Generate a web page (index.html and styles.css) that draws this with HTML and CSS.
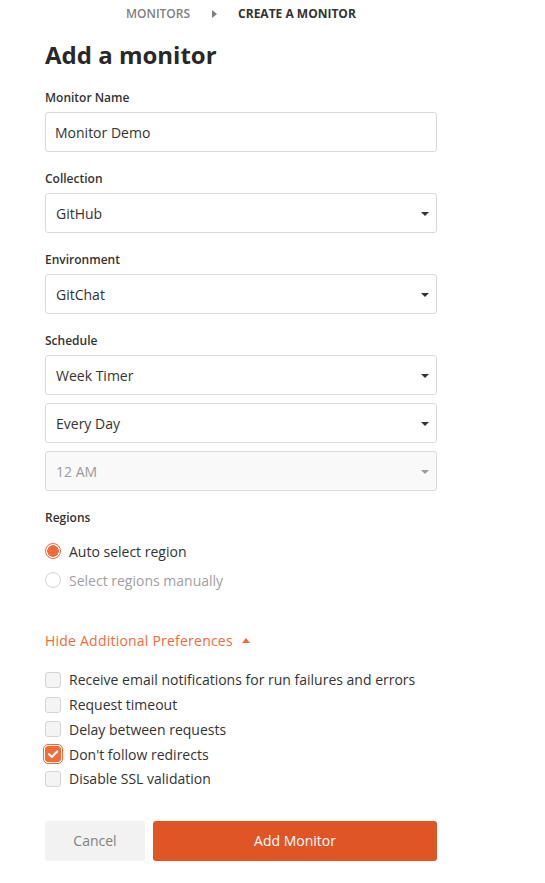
FILE: index.html
```html
<!DOCTYPE html>
<html>
<head>
<meta charset="utf-8">
<link rel="stylesheet" href="styles.css">
</head>
<body>
<nav class="crumbs">
  <span class="crumb">MONITORS</span>
  <span class="crumb-sep"></span>
  <span class="crumb current">CREATE A MONITOR</span>
</nav>
<main class="form">
  <h1 class="title">Add a monitor</h1>

  <div class="field">
    <div class="label">Monitor Name</div>
    <div class="control">Monitor Demo</div>
  </div>

  <div class="field">
    <div class="label">Collection</div>
    <div class="control select">GitHub<span class="caret"></span></div>
  </div>

  <div class="field">
    <div class="label">Environment</div>
    <div class="control select">GitChat<span class="caret"></span></div>
  </div>

  <div class="field">
    <div class="label">Schedule</div>
    <div class="stack">
      <div class="control select">Week Timer<span class="caret"></span></div>
      <div class="control select">Every Day<span class="caret"></span></div>
      <div class="control select disabled">12 AM<span class="caret"></span></div>
    </div>
  </div>

  <div class="field">
    <div class="label">Regions</div>
    <div class="radios">
      <div class="radio-row"><span class="radio on"></span><span>Auto select region</span></div>
      <div class="radio-row muted"><span class="radio"></span><span>Select regions manually</span></div>
    </div>
  </div>

  <div class="toggle">Hide Additional Preferences<span class="up"></span></div>

  <div class="checks">
    <div class="check-row"><span class="box"></span><span>Receive email notifications for run failures and errors</span></div>
    <div class="check-row"><span class="box"></span><span>Request timeout</span></div>
    <div class="check-row"><span class="box"></span><span>Delay between requests</span></div>
    <div class="check-row"><span class="box on"><svg viewBox="0 0 16 16" width="16" height="16"><path d="M4 8.2l2.8 2.8L12.2 5.4" fill="none" stroke="#fff" stroke-width="2.2" stroke-linecap="round" stroke-linejoin="round"/></svg></span><span>Don't follow redirects</span></div>
    <div class="check-row"><span class="box"></span><span>Disable SSL validation</span></div>
  </div>

  <div class="actions">
    <button class="btn cancel">Cancel</button>
    <button class="btn primary">Add Monitor</button>
  </div>
</main>
</body>
</html>
```
FILE: styles.css
```css
* { box-sizing: border-box; }
body {
  margin: 0;
  font-family: "Open Sans", "Noto Sans", sans-serif;
  color: #333;
  background: #fff;
}
.crumbs {
  display: flex;
  align-items: center;
  padding: 4px 0 0 126px;
  height: 24px;
  font-size: 12px;
  line-height: 20px;
  font-weight: 600;
}
.crumb { color: #808080; }
.crumb.current { color: #333; font-weight: 700; }
.crumb-sep {
  width: 0; height: 0;
  margin: 0 21px 0 22px;
  border-top: 4px solid transparent;
  border-bottom: 4px solid transparent;
  border-left: 5px solid #808080;
}
.form {
  width: 392px;
  margin-left: 45px;
}
.title {
  margin: 15px 0 19px;
  font-size: 24px;
  line-height: 32px;
  font-weight: 700;
  color: #282828;
}
.field { margin-bottom: 19px; }
.label {
  font-size: 12px;
  line-height: 16px;
  font-weight: 600;
  margin-bottom: 6px;
  color: #333;
}
.control {
  position: relative;
  height: 40px;
  border: 1px solid #dadada;
  border-radius: 3px;
  padding: 0 9px;
  display: flex;
  align-items: center;
  font-size: 14px;
  color: #333;
  background: #fff;
}
.select { padding-left: 10px; }
.caret {
  position: absolute;
  right: 7px;
  top: 18px;
  width: 0; height: 0;
  border-left: 4px solid transparent;
  border-right: 4px solid transparent;
  border-top: 4px solid #333;
}
.disabled { background: #f9f9f9; color: #9a9a9a; }
.disabled .caret { border-top-color: #9a9a9a; }
.stack { display: flex; flex-direction: column; gap: 8px; }
.radios {
  display: flex;
  flex-direction: column;
  gap: 5px;
  padding-top: 7px;
}
.radio-row {
  display: flex;
  align-items: center;
  gap: 8px;
  height: 24px;
  font-size: 14px;
  color: #333;
}
.radio-row.muted { color: #a0a0a0; }
.radio {
  width: 16px; height: 16px;
  border-radius: 50%;
  border: 1px solid #d4d4d4;
  background: #fff;
  flex: none;
}
.radio.on {
  border: 1px solid #f26b3a;
  background: radial-gradient(circle, #f26b3a 0 5.5px, #fff 6px);
}
.toggle {
  display: flex;
  align-items: center;
  margin-top: 38px;
  height: 20px;
  font-size: 14px;
  letter-spacing: 0.22px;
  color: #f26b3a;
}
.up {
  margin-left: 9px;
  width: 0; height: 0;
  border-left: 4px solid transparent;
  border-right: 4px solid transparent;
  border-bottom: 5px solid #f26b3a;
}
.checks { margin-top: 17.5px; }
.check-row {
  display: flex;
  align-items: center;
  gap: 8px;
  height: 24.75px;
  font-size: 14px;
  color: #333;
}
.box {
  position: relative;
  width: 16px; height: 16px;
  border: 1px solid #d4d4d4;
  border-radius: 3px;
  background: #f4f4f4;
  flex: none;
}
.box.on {
  border-color: #f26b3a;
  background: #f26b3a;
  outline: 1px solid #f26b3a;
  outline-offset: 1px;
}
.box svg { position: absolute; left: -1px; top: -1px; }
.actions {
  display: flex;
  gap: 8px;
  margin-top: 29.5px;
}
.btn {
  height: 40px;
  border: 0;
  border-radius: 3px;
  font-family: inherit;
  font-size: 14px;
}
.cancel {
  width: 100px;
  background: #f2f2f2;
  color: #808080;
}
.primary {
  flex: 1;
  background: #e05526;
  color: #fff;
}
```
